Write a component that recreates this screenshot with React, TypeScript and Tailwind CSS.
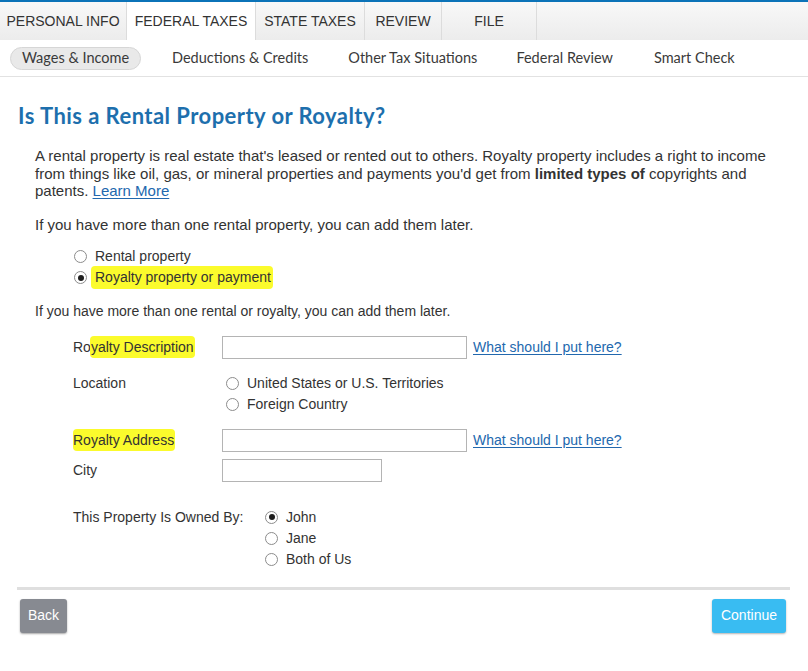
import React from "react"

const tabs = [
  { label: "PERSONAL INFO", w: "w-[127px]", active: false },
  { label: "FEDERAL TAXES", w: "w-[129px]", active: true },
  { label: "STATE TAXES", w: "w-[109px]", active: false },
  { label: "REVIEW", w: "w-[77px]", active: false },
  { label: "FILE", w: "w-[95px]", active: false },
]

function Radio({ checked = false }: { checked?: boolean }) {
  return (
    <span className="flex h-[13px] w-[13px] shrink-0 items-center justify-center rounded-full border border-[#8c8c8c] bg-white">
      {checked && <span className="h-[6px] w-[6px] rounded-full bg-[#1e1e1e]" />}
    </span>
  )
}

function RadioRow({ label, checked, hl }: { label: string; checked?: boolean; hl?: boolean }) {
  return (
    <div className="flex h-[21px] items-center gap-[8px]">
      <Radio checked={checked} />
      {hl ? (
        <span className="-ml-[4px] rounded-[4px] bg-[#fbfb2c] py-[3px] pl-[4px] pr-[2px]">{label}</span>
      ) : (
        <span>{label}</span>
      )}
    </div>
  )
}

function HelpLink() {
  return <a className="ml-[6px] text-[#2268ae] underline underline-offset-2">What should I put here?</a>
}

export default function App() {
  return (
    <div className="min-h-[671px] w-[808px] bg-white font-['Liberation_Sans',Arial,sans-serif] text-[#333]">
      {/* top tabs */}
      <div className="h-[2px] bg-[#0b73b8]" />
      <div className="flex h-[38px] bg-gradient-to-b from-[#f8f8f8] to-[#ececec]">
        {tabs.map((t) => (
          <div
            key={t.label}
            className={`${t.w} flex items-center justify-center border-r border-[#dcdcdc] text-[14px] ${
              t.active ? "bg-white" : ""
            }`}
          >
            {t.label}
          </div>
        ))}
      </div>

      {/* sub nav */}
      <div className="flex h-[37px] items-center border-b border-[#e2e2e2] pl-[10px] font-['Lato',sans-serif] text-[14.5px] text-[#3a3a3a]">
        <span className="flex h-[23px] w-[131px] items-center justify-center rounded-full border border-[#d6d6d6] bg-[#e9e9e9]">
          Wages &amp; Income
        </span>
        <span className="ml-[31px]">Deductions &amp; Credits</span>
        <span className="ml-[40px]">Other Tax Situations</span>
        <span className="ml-[39px]">Federal Review</span>
        <span className="ml-[41px]">Smart Check</span>
      </div>

      <div className="pl-[18px] pr-[18px]">
        <h1 className="mt-[25px] font-['Lato',sans-serif] text-[22px] font-bold leading-[28px] tracking-[0.45px] text-[#1d6fad]">
          Is This a Rental Property or Royalty?
        </h1>

        <div className="pl-[17px] pr-[14px] text-[15px] leading-[17.5px]">
          <p className="mt-[17px]">
            A rental property is real estate that's leased or rented out to others. Royalty property includes a right
            to income from things like oil, gas, or mineral properties and payments you'd get from{" "}
            <b>limited types of</b> copyrights and patents.{" "}
            <a className="text-[#2268ae] underline underline-offset-2">Learn More</a>
          </p>
          <p className="mt-[16px]">If you have more than one rental property, you can add them later.</p>

          <div className="mt-[13px] pl-[39px] text-[14px]">
            <RadioRow label="Rental property" />
            <RadioRow label="Royalty property or payment" checked hl />
          </div>

          <p className="mt-[15px] text-[14px]">If you have more than one rental or royalty, you can add them later.</p>
        </div>

        {/* form */}
        <div className="mt-[15px] pl-[55px] text-[14px]">
          <div className="flex h-[23px] items-center">
            <span className="w-[149px]">
              Ro
              <span className="-ml-[1px] rounded-[4px] bg-[#fbfb2c] py-[3px] pl-[1px] pr-[1px]">yalty Description</span>
            </span>
            <input className="h-[23px] w-[245px] border border-[#b4b4b4] bg-white" />
            <HelpLink />
          </div>

          <div className="mt-[14px] flex">
            <span className="w-[153px] leading-[21px]">Location</span>
            <div>
              <RadioRow label="United States or U.S. Territories" />
              <RadioRow label="Foreign Country" />
            </div>
          </div>

          <div className="mt-[14px] flex h-[23px] items-center">
            <span className="w-[149px]">
              <span className="rounded-[4px] bg-[#fbfb2c] py-[3px] pr-[1px]">Royalty Address</span>
            </span>
            <input className="h-[23px] w-[245px] border border-[#b4b4b4] bg-white" />
            <HelpLink />
          </div>

          <div className="mt-[7px] flex h-[23px] items-center">
            <span className="w-[149px]">City</span>
            <input className="h-[23px] w-[160px] border border-[#b4b4b4] bg-white" />
          </div>

          <div className="mt-[25px] flex">
            <span className="w-[192px] leading-[21px]">This Property Is Owned By:</span>
            <div>
              <RadioRow label="John" checked />
              <RadioRow label="Jane" />
              <RadioRow label="Both of Us" />
            </div>
          </div>
        </div>

        <div className="-ml-[1px] mt-[17px] h-[3px] w-[773px] bg-[#dfdfdf]" />

        {/* buttons */}
        <div className="mt-[9px] flex w-[768px] justify-between pl-[2px] text-[14px] text-white">
          <button className="h-[34px] w-[47px] rounded-[3px] bg-[#878a91] shadow-[0_1px_2px_rgba(0,0,0,0.35)]">
            Back
          </button>
          <button className="h-[34px] w-[74px] rounded-[3px] bg-[#39bcf2] shadow-[0_1px_2px_rgba(0,0,0,0.3)]">
            Continue
          </button>
        </div>
      </div>
    </div>
  )
}
